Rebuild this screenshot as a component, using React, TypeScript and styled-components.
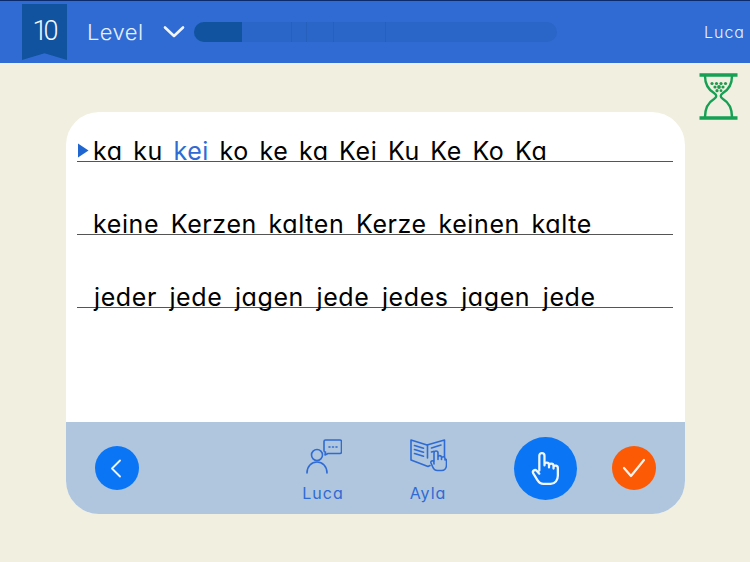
import React from "react";
import styled, { createGlobalStyle } from "styled-components";

const Global = createGlobalStyle`
  html, body { margin: 0; padding: 0; background: #f1efdf; }
  body { font-family: "Inter", "Lato", sans-serif; font-feature-settings: "cv11" 1; width: 750px; height: 562px; overflow: hidden; }
`;

const Page = styled.div`
  width: 750px;
  height: 562px;
  display: flex;
  flex-direction: column;
  background: #f1efdf;
`;

const Header = styled.header`
  height: 63px;
  box-sizing: border-box;
  border-top: 1px solid #0b2a6b;
  background: #2f6bd3;
  display: flex;
  align-items: center;
  padding-left: 22px;
  padding-right: 5px;
  color: #e8f0fb;
`;

const Ribbon = styled.div`
  width: 45px;
  height: 56px;
  background: #11539e;
  clip-path: polygon(0 0, 100% 0, 100% 100%, 50% 88%, 0 100%);
  display: flex;
  justify-content: center;
  padding: 10px 2px 0 0;
  box-sizing: border-box;
  font-family: "Roboto", sans-serif;
  font-size: 27px;
  font-weight: 300;
  letter-spacing: -4px;
  color: #f4f7fc;
  line-height: 34px;
`;

const LevelLabel = styled.span`
  margin-left: 20px;
  font-size: 22px;
  font-weight: 300;
  letter-spacing: 0.4px;
  width: 64px;
`;

const Chevron = styled.svg`
  margin-left: 12px;
  width: 22px;
  height: 14px;
`;

const Progress = styled.div`
  margin-left: 9px;
  width: 363px;
  height: 20px;
  border-radius: 10px;
  background: #2966c8;
  overflow: hidden;
  display: flex;
`;

const ProgressFill = styled.div`
  width: 48px;
  background: #11539e;
`;

const Tick = styled.div<{ $w: number }>`
  width: ${(p) => p.$w}px;
  box-sizing: border-box;
  border-right: 1px solid #2660bd;
`;

const UserName = styled.span`
  margin-left: auto;
  font-size: 16px;
  font-weight: 300;
  letter-spacing: 1px;
`;

const TimerRow = styled.div`
  height: 49px;
  box-sizing: border-box;
  display: flex;
  justify-content: flex-end;
  padding: 9px 12px 0 0;
`;

const Card = styled.main`
  margin-left: 66px;
  width: 619px;
  height: 402px;
  border-radius: 33px;
  background: #fff;
  overflow: hidden;
  display: flex;
  flex-direction: column;
`;

const Lines = styled.div`
  flex: 1;
  padding: 15px 12px 0 11px;
  display: flex;
  flex-direction: column;
  gap: 38px;
`;

const TextLine = styled.div<{ $ws: number; $pl: number }>`
  position: relative;
  height: 34px;
  border-bottom: 1px solid #555;
  padding-left: ${(p) => p.$pl}px;
  font-size: 25px;
  line-height: 48px;
  letter-spacing: 0.6px;
  word-spacing: ${(p) => p.$ws}px;
  color: #000;
  white-space: nowrap;
`;

const Marker = styled.svg`
  position: absolute;
  left: 0;
  top: 16px;
  width: 12px;
  height: 15px;
`;

const Active = styled.span`
  color: #2f6bd3;
`;

const Footer = styled.footer`
  height: 92px;
  background: #afc6de;
  display: flex;
  align-items: center;
  padding-left: 29px;
`;

const RoundButton = styled.button<{ $size: number; $bg: string; $ml: number }>`
  width: ${(p) => p.$size}px;
  height: ${(p) => p.$size}px;
  margin-left: ${(p) => p.$ml}px;
  border: 0;
  padding: 0;
  border-radius: 50%;
  background: ${(p) => p.$bg};
  display: flex;
  align-items: center;
  justify-content: center;
  flex: none;
`;

const Speaker = styled.div<{ $ml: number }>`
  width: 60px;
  margin-left: ${(p) => p.$ml}px;
  align-self: flex-start;
  padding-top: 16px;
  display: flex;
  flex-direction: column;
  align-items: center;
  gap: 8px;
  color: #2f6bd3;
  font-size: 16px;
  letter-spacing: 1px;
  line-height: 20px;
`;

export default function App() {
  return (
    <Page>
      <Global />
      <Header>
        <Ribbon>10</Ribbon>
        <LevelLabel>Level</LevelLabel>
        <Chevron viewBox="0 0 22 14" fill="none" stroke="#f2f6fc" strokeWidth="2.6" strokeLinecap="round" strokeLinejoin="round">
          <path d="M2 2.500 11 11 20 2.500" />
        </Chevron>
        <Progress>
          <ProgressFill />
          <Tick $w={50} />
          <Tick $w={15} />
          <Tick $w={27} />
          <Tick $w={52} />
        </Progress>
        <UserName>Luca</UserName>
      </Header>
      <TimerRow>
        <svg width="39" height="48" viewBox="0 0 39 48" fill="none">
          <path d="M0.500 3h38M0.500 46h38" stroke="#15a053" strokeWidth="3.600" />
          <path d="M6 4c0 10 4 14 9 17 3 2 3 4 0 6-5 3-9 8-9 18M33 4c0 10-4 14-9 17-3 2-3 4 0 6 5 3 9 8 9 18" stroke="#15a053" strokeWidth="2.400" />
          <g fill="#1d9a4c">
            <circle cx="13" cy="11.500" r="1.600" /><circle cx="17.500" cy="11.500" r="1.600" /><circle cx="22" cy="11.500" r="1.600" /><circle cx="26.500" cy="11.500" r="1.600" />
            <circle cx="16" cy="15" r="1.600" /><circle cx="20" cy="15" r="1.900" /><circle cx="24" cy="15" r="1.600" />
            <circle cx="18" cy="18.700" r="1.600" /><circle cx="22" cy="18.700" r="1.400" />
          </g>
        </svg>
      </TimerRow>
      <Card>
        <Lines>
          <TextLine $ws={2.9} $pl={16}>
            <Marker viewBox="0 0 12 15"><path d="M1 0.500 11.500 7.500 1 14.500Z" fill="#1f66d0" /></Marker>
            ka ku <Active>kei</Active> ko ke ka Kei Ku Ke Ko Ka
          </TextLine>
          <TextLine $ws={4} $pl={16}>keine Kerzen kalten Kerze keinen kalte</TextLine>
          <TextLine $ws={4.9} $pl={17}>jeder jede jagen jede jedes jagen jede</TextLine>
        </Lines>
        <Footer>
          <RoundButton $size={44} $bg="#0a75f5" $ml={0}>
            <svg width="12" height="20" viewBox="0 0 12 20" fill="none" stroke="#eef4fd" strokeWidth="1.800" strokeLinecap="round" strokeLinejoin="round"><path d="M9 2.500 1 10.500l8 8" /></svg>
          </RoundButton>
          <Speaker $ml={154}>
            <svg width="37" height="37" viewBox="0 0 37 37" fill="none" stroke="#2f6bd3" strokeWidth="1.600" strokeLinecap="round" strokeLinejoin="round">
              <path d="M19 3.500c0-1 .6-1.500 1.500-1.500H35c1 0 1.500.6 1.500 1.500V14c0 1-.6 1.500-1.500 1.500H23l-3 1.500.5-3H20c-1 0-1-.6-1-1.500Z" />
              <path d="M24 9h1M27.500 9h1M31 9h1" />
              <circle cx="12" cy="17" r="5.500" />
              <path d="M2 35c0-6.500 4.500-11 10-11s10 4.500 10 11" />
            </svg>
            Luca
          </Speaker>
          <Speaker $ml={45}>
            <svg width="37" height="37" viewBox="0 0 37 37" fill="none" stroke="#2f6bd3" strokeWidth="1.600" strokeLinecap="round" strokeLinejoin="round">
              <path d="M20 27.500 18 28.500 1 22V2l16 5 17.500-5v17" />
              <path d="M17.500 7v13" />
              <path d="M4.500 7.500l9 2.800M4.500 11.500l9 2.800M4.500 15.500l9 2.800M21.500 10l9.500-3M21.500 14l2-.6" />
              <path d="M24 24V15a2 2 0 0 1 4 0v6.500M28 19a1.800 1.800 0 0 1 3.500 0v2.500M31.500 20a1.800 1.800 0 0 1 3.500.4v1.500M35 21c1 0 1.500 1 1.500 2v4c0 3-2 5.500-5 5.500h-4c-2.500 0-4-1.500-5-4l-1.500-3.500c-.6-1.800 1.500-3 2.800-1.500L24 26" />
            </svg>
            Ayla
          </Speaker>
          <RoundButton $size={63} $bg="#0a75f5" $ml={56}>
            <svg width="33" height="35" viewBox="0 0 32 34" fill="none" stroke="#f1f6fd" strokeWidth="2.200" strokeLinecap="round" strokeLinejoin="round">
              <path d="M10 19V4.500a2.500 2.500 0 0 1 5 0V14M15 13.500a2.200 2.200 0 0 1 4.400 0V16M19.400 14.500a2.200 2.200 0 0 1 4.400 0V17M23.800 15.500a2.200 2.200 0 0 1 4.200 1V24c0 4-2.500 8-7 8h-7c-3 0-4.500-1.600-6-4l-4-6.500c-1-2 1.500-4 3.400-2.400L10 22" />
            </svg>
          </RoundButton>
          <RoundButton $size={44} $bg="#fc5a05" $ml={35}>
            <svg width="24" height="20" viewBox="0 0 24 20" fill="none" stroke="#fdf2ea" strokeWidth="2.200" strokeLinecap="round" strokeLinejoin="round"><path d="M2 10l7 8L22 2" /></svg>
          </RoundButton>
        </Footer>
      </Card>
    </Page>
  );
}
